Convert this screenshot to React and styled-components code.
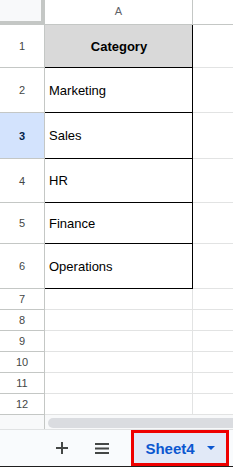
import styled, { createGlobalStyle } from "styled-components";

const GlobalStyle = createGlobalStyle`
  html, body {
    margin: 0;
    padding: 0;
    background: #ffffff;
  }
  body {
    font-family: "Liberation Sans", Arial, sans-serif;
    overflow: hidden;
  }
`;

const rows = [
  { n: 1, h: 43, text: "Category", head: true, boxed: true },
  { n: 2, h: 45, text: "Marketing", boxed: true },
  { n: 3, h: 46, text: "Sales", boxed: true, selected: true },
  { n: 4, h: 44, text: "HR", boxed: true },
  { n: 5, h: 41, text: "Finance", boxed: true },
  { n: 6, h: 45, text: "Operations", boxed: true },
  { n: 7, h: 21 },
  { n: 8, h: 21 },
  { n: 9, h: 21 },
  { n: 10, h: 21 },
  { n: 11, h: 21 },
  { n: 12, h: 21 },
];

export default function App() {
  return (
    <>
      <GlobalStyle />
      <Sheet>
        <HeaderRow>
          <Corner />
          <ColHeader>A</ColHeader>
          <ColHeader $last />
        </HeaderRow>
        {rows.map((row) => (
          <Row key={row.n} $h={row.h}>
            <RowHeader $selected={row.selected}>{row.n}</RowHeader>
            <CellA $boxed={row.boxed} $head={row.head}>
              {row.text}
            </CellA>
            <CellB />
          </Row>
        ))}
        <ScrollArea>
          <ScrollGutter />
          <ScrollTrack>
            <Thumb />
          </ScrollTrack>
        </ScrollArea>
        <BottomBar>
          <IconButton aria-label="Add sheet">
            <svg width="12" height="12" viewBox="0 0 12 12">
              <path d="M6 0v12M0 6h12" stroke="#444746" strokeWidth="2" />
            </svg>
          </IconButton>
          <IconButton aria-label="All sheets">
            <svg width="14" height="11" viewBox="0 0 14 11">
              <path
                d="M0 1h14M0 5.5h14M0 10h14"
                stroke="#444746"
                strokeWidth="2"
              />
            </svg>
          </IconButton>
          <SheetTab>
            Sheet4
            <svg width="8" height="4" viewBox="0 0 8 4">
              <path d="M0 0h8L4 4z" fill="#0b57d0" />
            </svg>
          </SheetTab>
        </BottomBar>
        <BottomEdge />
      </Sheet>
    </>
  );
}

const Sheet = styled.div`
  width: 233px;
  height: 467px;
  display: flex;
  flex-direction: column;
  overflow: hidden;
`;

const HeaderRow = styled.div`
  display: flex;
  height: 25px;
  flex-shrink: 0;
`;

const Corner = styled.div`
  box-sizing: border-box;
  width: 45px;
  height: 25px;
  background: #f8f9fa;
  border-right: 4px solid #c4c7c5;
  border-bottom: 4px solid #c4c7c5;
`;

const ColHeader = styled.div`
  box-sizing: border-box;
  width: ${(p) => (p.$last ? "auto" : "148px")};
  flex: ${(p) => (p.$last ? 1 : "none")};
  height: 25px;
  border-right: ${(p) => (p.$last ? "none" : "1px solid #c4c7c5")};
  border-bottom: 1px solid #c4c7c5;
  display: flex;
  align-items: center;
  justify-content: center;
  font-size: 11px;
  color: #5f6368;
  padding-bottom: 2px;
`;

const Row = styled.div`
  display: flex;
  height: ${(p) => p.$h}px;
  flex-shrink: 0;
`;

const RowHeader = styled.div`
  box-sizing: border-box;
  width: 45px;
  border-right: 1px solid #c4c7c5;
  border-bottom: 1px solid #c4c7c5;
  background: ${(p) => (p.$selected ? "#d3e3fd" : "#ffffff")};
  color: ${(p) => (p.$selected ? "#041e49" : "#444746")};
  font-weight: ${(p) => (p.$selected ? 700 : 400)};
  font-size: 11px;
  display: flex;
  align-items: center;
  justify-content: center;
`;

const CellA = styled.div`
  box-sizing: border-box;
  width: 148px;
  border-right: 1px solid ${(p) => (p.$boxed ? "#000000" : "#e2e3e3")};
  border-bottom: 1px solid ${(p) => (p.$boxed ? "#000000" : "#e2e3e3")};
  background: ${(p) => (p.$head ? "#d9d9d9" : "#ffffff")};
  display: flex;
  align-items: center;
  justify-content: ${(p) => (p.$head ? "center" : "flex-start")};
  padding: 0 3px 0 4px;
  font-size: 13px;
  font-weight: ${(p) => (p.$head ? 700 : 400)};
  color: #000000;
`;

const CellB = styled.div`
  flex: 1;
  border-bottom: 1px solid #e2e3e3;
`;

const ScrollArea = styled.div`
  display: flex;
  height: 14px;
  flex-shrink: 0;
  border-bottom: 1px solid #e0e2e3;
`;

const ScrollGutter = styled.div`
  box-sizing: border-box;
  width: 45px;
  background: #f8f9fa;
  border-right: 1px solid #c4c7c5;
`;

const ScrollTrack = styled.div`
  flex: 1;
  background: #f8f9fa;
  padding: 3px 0 1px 3px;
  display: flex;
`;

const Thumb = styled.div`
  flex: 1;
  background: #dadce0;
  border-radius: 5px 0 0 5px;
`;

const BottomBar = styled.div`
  flex: 1;
  background: #f9fbfd;
  display: flex;
  align-items: center;
  padding-left: 50px;
  gap: 16px;
`;

const IconButton = styled.div`
  width: 24px;
  height: 24px;
  display: flex;
  align-items: center;
  justify-content: center;
`;

const SheetTab = styled.div`
  box-sizing: border-box;
  margin-left: 1px;
  width: 98px;
  height: 36px;
  border: 3px solid #ee0000;
  background: #e1e9f7;
  display: flex;
  align-items: center;
  justify-content: center;
  gap: 12px;
  font-family: "Liberation Sans", Arial, sans-serif;
  font-weight: 700;
  font-size: 15px;
  color: #0b57d0;
`;

const BottomEdge = styled.div`
  height: 3px;
  flex-shrink: 0;
  background: #1f1f1f;
`;
